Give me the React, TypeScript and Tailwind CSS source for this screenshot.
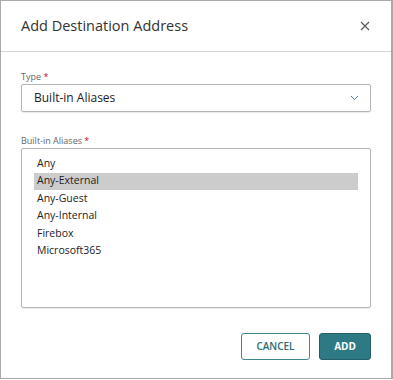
const aliases = [
  "Any",
  "Any-External",
  "Any-Guest",
  "Any-Internal",
  "Firebox",
  "Microsoft365",
];

const App = (): JSX.Element => {
  const selected = "Any-External";

  return (
    <div className="w-[393px] h-[380px] bg-white font-['Open_Sans',sans-serif]">
      <div className="w-[393px] h-[379px] border border-[#a9a9a9] border-r-2 bg-white flex flex-col">
        <div className="h-[51px] shrink-0 flex items-center justify-between pl-5 pr-[20px] border-b border-[#d6d6d6]">
          <h1 className="text-[14.5px] text-[#333]">Add Destination Address</h1>
          <button className="w-[12px] h-[12px] flex items-center justify-center text-[#555]">
            <svg width="10" height="10" viewBox="0 0 10 10" fill="none" stroke="currentColor" strokeWidth="1.1">
              <path d="M1 1 L9 9 M9 1 L1 9" />
            </svg>
          </button>
        </div>

        <div className="px-5 pt-[18px] flex flex-col">
          <label className="h-[14px] text-[9px] leading-[14px] text-[#666]">
            Type <span className="text-[#d0021b]">*</span>
          </label>
          <div className="h-[28px] border border-[#b5b5b5] rounded-[2px] flex items-center justify-between pl-[12px] pr-[11px] shadow-[0_1px_1px_rgba(0,0,0,0.08)]">
            <span className="text-[12px] text-[#222]">Built-in Aliases</span>
            <svg width="9" height="6" viewBox="0 0 9 6" fill="none" stroke="#3a8590" strokeWidth="1">
              <path d="M1 1 L4.5 4.5 L8 1" />
            </svg>
          </div>

          <label className="mt-[22px] h-[14px] text-[9px] leading-[14px] text-[#666]">
            Built-in Aliases <span className="text-[#d0021b]">*</span>
          </label>
          <ul className="h-[160px] border border-[#b5b5b5] rounded-[2px] px-[12px] pt-[6px] shadow-[0_1px_1px_rgba(0,0,0,0.08)]">
            {aliases.map((alias) => (
              <li
                key={alias}
                className={`h-[17.5px] pl-[3px] flex items-center text-[10.5px] text-[#222] ${
                  alias === selected ? "bg-[#cccccc]" : ""
                }`}
              >
                {alias}
              </li>
            ))}
          </ul>

          <div className="mt-[25px] flex justify-end gap-[9px]">
            <button className="w-[69px] h-[27px] rounded-[3px] border border-[#3d8791] bg-white text-[10px] font-semibold text-[#2b6c75]">
              CANCEL
            </button>
            <button className="w-[52px] h-[27px] rounded-[3px] border border-[#235f68] bg-[#2e7a84] text-[10px] font-bold text-white">
              ADD
            </button>
          </div>
        </div>
      </div>
    </div>
  );
};

export default App;
